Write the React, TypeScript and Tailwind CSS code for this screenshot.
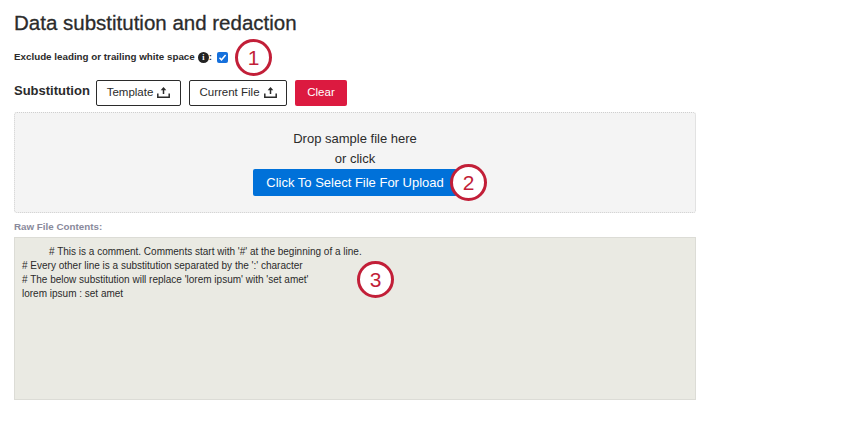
const UploadIcon = () => (
  <svg width="13" height="11" viewBox="0 0 13 11" fill="none" className="ml-[4px]" aria-hidden="true">
    <path d="M6.5 7V1.5" stroke="#2b2b2b" strokeWidth="1.5" />
    <path d="M6.5 0L9.3 3.2H3.7z" fill="#2b2b2b" />
    <path d="M.8 6.5v3.7h11.4V6.5" stroke="#2b2b2b" strokeWidth="1.5" />
  </svg>
);

const Callout = ({ n, className }: { n: number; className: string }) => (
  <div
    className={`absolute w-[37px] h-[37px] rounded-full border-[3px] border-[#c21f38] bg-white flex items-center justify-center text-[21px] text-[#c21f38] ${className}`}
  >
    {n}
  </div>
);

export default function App() {
  return (
    <div className="relative w-[850px] h-[425px] bg-white overflow-hidden font-['Liberation_Sans',Arial,sans-serif] text-[#2b2b2b]">
      <div className="w-[682px] ml-[14px] pt-[11px]">
        <h1 className="text-[20.5px] leading-[24px] [-webkit-text-stroke:0.3px_#2b2b2b]">Data substitution and redaction</h1>

        <div className="flex items-center h-[16px] mt-[14px] text-[9.8px] font-bold">
          <span>Exclude leading or trailing white space</span>
          <span className="ml-[3px] w-[11px] h-[11px] rounded-full bg-[#222] text-white text-[8px] leading-[11px] text-center font-['Liberation_Serif',serif]">i</span>
          <span>:</span>
          <span className="ml-[5px] w-[11px] h-[11px] rounded-[2px] bg-[#1570dc] flex items-center justify-center">
            <svg width="9" height="9" viewBox="0 0 9 9" fill="none" aria-hidden="true">
              <path d="M1.5 4.8l2 2L7.6 2" stroke="#fff" strokeWidth="1.5" />
            </svg>
          </span>
        </div>

        <div className="flex items-center mt-[14px] h-[27px]">
          <span className="w-[82px] text-[13px] font-bold -mt-[3px]">Substitution</span>
          <button className="w-[85px] h-[26px] border border-[#2b2b2b] rounded-[2px] flex items-center justify-center text-[11.5px]">
            Template
            <UploadIcon />
          </button>
          <button className="ml-[8px] w-[98px] h-[26px] border border-[#2b2b2b] rounded-[2px] flex items-center justify-center text-[11.5px]">
            Current File
            <UploadIcon />
          </button>
          <button className="ml-[8px] w-[52px] h-[26px] bg-[#dc1a40] rounded-[2px] text-white text-[11.5px]">Clear</button>
        </div>

        <div className="mt-[6px] h-[101px] border border-dotted border-[#cfcfcf] rounded-[3px] bg-[#f4f4f4] flex flex-col items-center pt-[16px]">
          <span className="text-[13px] leading-[20px]">Drop sample file here</span>
          <span className="text-[13px] leading-[20px]">or click</span>
          <button className="w-[204px] h-[27px] bg-[#0071d9] rounded-[2px] text-white text-[13px]">Click To Select File For Upload</button>
        </div>

        <div className="mt-[7px] text-[9.8px] leading-[14px] font-bold text-[#8a8a9c]">Raw File Contents:</div>

        <div className="mt-[3px] h-[163px] border border-[#dcdcd6] bg-[#eaeae3] px-[7px] pt-[7px] text-[10px] leading-[14px] text-[#2b2b2b] whitespace-pre-wrap">
          <div className="indent-[27px]"># This is a comment. Comments start with '#' at the beginning of a line.</div>
          <div># Every other line is a substitution separated by the ':' character</div>
          <div># The below substitution will replace 'lorem ipsum' with 'set amet'</div>
          <div>lorem ipsum : set amet</div>
        </div>
      </div>

      <Callout n={1} className="left-[235px] top-[39px]" />
      <Callout n={2} className="left-[450px] top-[164px]" />
      <Callout n={3} className="left-[357px] top-[261px]" />
    </div>
  );
}
